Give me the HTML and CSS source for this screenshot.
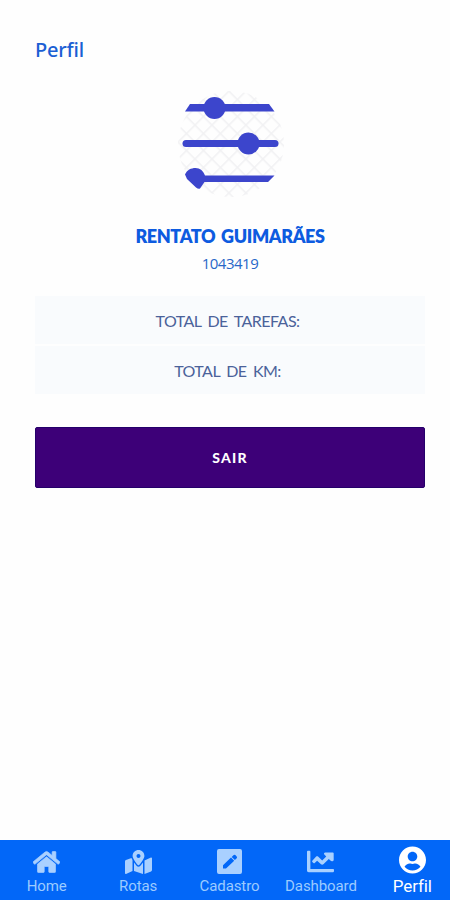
FILE: index.html
```html
<!DOCTYPE html>
<html lang="pt-BR">
<head>
    <meta charset="UTF-8">
    <meta name="viewport" content="width=device-width, initial-scale=1.0">
    <title>Perfil</title>
    <link rel="stylesheet" href="styles.css">
</head>
<body>
    <div class="tela">
        <main class="conteudo">
            <h1>Perfil</h1>

            <svg class="avatar" viewBox="0 0 106 108">
                <defs>
                    <pattern id="xadrez" width="12" height="12" patternUnits="userSpaceOnUse" patternTransform="rotate(45)">
                        <rect width="12" height="12" fill="#fefefe"/>
                        <path d="M0 0H12M0 0V12" stroke="#f1f1f3" stroke-width="3"/>
                    </pattern>
                </defs>
                <circle cx="53" cy="54" r="53" fill="url(#xadrez)"/>
                <g fill="#3c45cc">
                    <path d="M12 14H91L96.500 21.500H7Z"/>
                    <circle cx="36.500" cy="18" r="11"/>
                    <rect x="4.500" y="50" width="96" height="7" rx="3.500"/>
                    <circle cx="70.500" cy="53.500" r="11"/>
                    <path d="M7 84.500C9 80 13 78 17.500 78C22 78 25.500 81 27 85.500H96.500L90 92H26.500L22 98.500Q20.500 99.500 18 97.500L9 89Z"/>
                </g>
            </svg>

            <h2>RENTATO GUIMARÃES</h2>
            <p class="matricula">1043419</p>

            <div class="totais">
                <p class="total">TOTAL DE TAREFAS:</p>
                <p class="total">TOTAL DE KM:</p>
            </div>

            <button type="button" class="botao-sair">SAIR</button>
        </main>

        <nav class="menu">
            <a class="item">
                <svg class="icone casa" viewBox="0 0 576 512"><path d="M280.370 148.260L96 300.110V464a16 16 0 0 0 16 16l112.060-.290a16 16 0 0 0 15.920-16V368a16 16 0 0 1 16-16h64a16 16 0 0 1 16 16v95.640a16 16 0 0 0 16 16.050L464 480a16 16 0 0 0 16-16V300L295.670 148.260a12.190 12.190 0 0 0-15.300 0zM571.600 251.470L488 182.560V44.050a12 12 0 0 0-12-12h-56a12 12 0 0 0-12 12v72.610L318.470 43a48 48 0 0 0-61 0L4.340 251.470a12 12 0 0 0-1.600 16.900l25.500 31A12 12 0 0 0 45.150 301l235.220-193.740a12.190 12.190 0 0 1 15.300 0L530.900 301a12 12 0 0 0 16.900-1.600l25.500-31a12 12 0 0 0-1.700-16.930z"/></svg>
                <span>Home</span>
            </a>
            <a class="item">
                <svg class="icone" viewBox="0 0 576 512"><path d="M288 0c-69.590 0-126 56.410-126 126 0 56.260 82.350 158.800 113.900 196.020 6.390 7.540 17.820 7.540 24.200 0C331.650 284.800 414 182.260 414 126 414 56.410 357.590 0 288 0zm0 168c-23.200 0-42-18.800-42-42s18.800-42 42-42 42 18.800 42 42-18.800 42-42 42zM20.120 215.950A32.006 32.006 0 0 0 0 245.660v250.320c0 11.320 11.430 19.060 21.940 14.860L160 448V214.920c-8.840-15.980-16.070-31.540-21.250-46.420L20.120 215.950zM288 359.670c-14.070 0-27.380-6.180-36.510-16.960-19.660-23.200-40.570-49.620-59.490-76.720v182l192 64V266c-18.920 27.090-39.820 53.520-59.490 76.720-9.130 10.770-22.440 16.950-36.510 16.950zm266.060-198.510L416 224v288l139.880-55.950A31.996 31.996 0 0 0 576 426.340V176.020c0-11.320-11.430-19.060-21.940-14.860z"/></svg>
                <span>Rotas</span>
            </a>
            <a class="item">
                <svg class="icone quadrado" viewBox="0 0 25 25"><path fill-rule="evenodd" d="M2 0H23Q25 0 25 2V23Q25 25 23 25H2Q0 25 0 23V2Q0 0 2 0ZM6 19.500H9L17.200 11.800L14 8.600L6 16.200ZM14.700 7.900L17.900 11.100L19.700 9.300Q20.500 8.300 19.700 7.400L18.300 6Q17.400 5.300 16.400 6.200Z"/></svg>
                <span>Cadastro</span>
            </a>
            <a class="item">
                <svg class="icone grafico" viewBox="0 0 512 448" preserveAspectRatio="none"><path transform="translate(0 -32)" d="M496 400H64V64c0-8.840-7.160-16-16-16H16C7.160 48 0 55.160 0 64v368c0 17.670 14.330 32 32 32h464c8.840 0 16-7.160 16-16v-32c0-8.840-7.160-16-16-16zM490 80H345.940c-21.380 0-32.090 25.850-16.970 40.970l36 36L288 234.750l-73.370-73.370c-12.500-12.500-32.760-12.500-45.250 0l-68.690 80c-6.250 6.250-6.250 16.380 0 22.630l22.620 22.620c6.250 6.250 16.380 6.250 22.630 0L192 239.250l73.370 70c12.500 12.500 32.760 12.500 45.250 0l103-103 36 36c15.120 15.120 56.380 4.410 56.380-16.970V96c0-8.840-7.150-16-16-16z"/></svg>
                <span>Dashboard</span>
            </a>
            <a class="item ativo">
                <svg class="icone" viewBox="0 0 496 512"><path d="M248 8C111 8 0 119 0 256s111 248 248 248 248-111 248-248S385 8 248 8zm0 96c48.600 0 88 39.400 88 88s-39.400 88-88 88-88-39.400-88-88 39.400-88 88-88zm0 344c-58.700 0-111.300-26.600-146.500-68.200 18.800-35.400 55.600-59.800 98.500-59.800 2.400 0 4.800.4 7.100 1.100 13 4.200 26.600 6.900 40.900 6.900 14.300 0 28-2.700 40.900-6.900 2.300-.7 4.700-1.100 7.100-1.100 42.900 0 79.700 24.400 98.500 59.800C359.300 421.400 306.700 448 248 448z"/></svg>
                <span>Perfil</span>
            </a>
        </nav>
    </div>
</body>
</html>
```
FILE: styles.css
```css
body {
    margin: 0;
    background-color: #fefefe;
    font-family: "Open Sans", "Noto Sans", sans-serif;
}

.tela {
    display: flex;
    flex-direction: column;
    height: 900px;
    overflow: hidden;
}

.conteudo {
    flex: 1;
    display: flex;
    flex-direction: column;
    padding: 35px 25px 0 35px;
    text-align: center;
}

h1 {
    margin: 0;
    color: #1b5fd4;
    font-family: "Noto Sans", sans-serif;
    font-size: 20px;
    font-weight: 500;
    line-height: 29px;
    letter-spacing: -0.2px;
    text-align: left;
}

.avatar {
    width: 106px;
    height: 108px;
    margin: 26px 0 0 143px;
}

h2 {
    margin: 24px 0 0;
    color: #0d5be0;
    font-family: Lato, sans-serif;
    font-size: 18px;
    font-weight: 800;
    line-height: 28px;
    letter-spacing: -0.4px;
    word-spacing: 2px;
}

.matricula {
    margin: 0;
    color: #2867c8;
    font-size: 15px;
    line-height: 26px;
    letter-spacing: -0.5px;
}

.totais {
    display: grid;
    gap: 2px;
    margin-top: 20px;
}

.total {
    margin: 0;
    padding: 1px 5px 0 0;
    background-color: #f9fbfd;
    color: #4b629a;
    font-family: Lato, sans-serif;
    font-size: 16px;
    line-height: 47px;
    letter-spacing: -0.55px;
    word-spacing: 3px;
}

.botao-sair {
    height: 61px;
    margin-top: 33px;
    padding: 0;
    border: 1px solid #25006a;
    border-radius: 2px;
    background-color: #3d0078;
    color: white;
    font-family: Lato, sans-serif;
    font-size: 14px;
    font-weight: 900;
    letter-spacing: 1.2px;
    cursor: pointer;
}

.menu {
    display: flex;
    height: 60px;
    margin-right: -8px;
    padding-left: 1px;
    background-color: #0267f8;
}

.item {
    flex: 1 1 0;
    display: flex;
    flex-direction: column;
    align-items: center;
    color: #9ccbff;
    font-family: Roboto, sans-serif;
    font-size: 15px;
    line-height: 20px;
    letter-spacing: -0.1px;
}

.icone {
    width: 27px;
    height: 26px;
    margin: 9px 0 1px;
    fill: #a9d0ff;
}

.casa {
    stroke: #a9d0ff;
    stroke-width: 14px;
}

.quadrado {
    width: 25px;
    height: 25px;
    margin-bottom: 2px;
}

.grafico {
    height: 23px;
    margin: 10px 0 3px;
}

.ativo {
    color: white;
    font-size: 17px;
}

.ativo .icone {
    height: 28px;
    margin: 6px 0 2px;
    fill: white;
}
```
